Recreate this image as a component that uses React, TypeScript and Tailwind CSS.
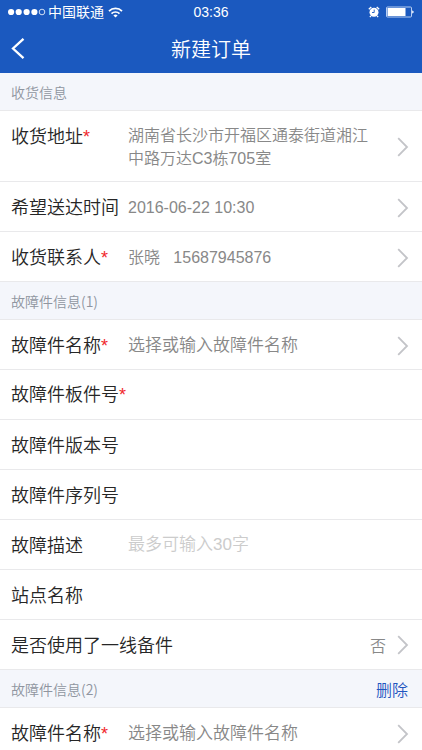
import { useState, type ReactNode } from "react";

const valueFont = "font-['Liberation_Sans','Noto_Sans_CJK_SC',sans-serif]";

function Chevron() {
  return (
    <svg className="h-5 w-3 shrink-0" viewBox="0 0 12 20" fill="none" aria-hidden="true">
      <path d="M1.2 1.2 10 10 1.2 18.8" stroke="#c3c4c8" strokeWidth="1.8" />
    </svg>
  );
}

function StatusBar() {
  return (
    <div className={`grid h-6 grid-cols-[1fr_auto_1fr] items-center px-2 text-sm leading-6 ${valueFont}`}>
      <div className="flex items-center">
        <svg className="h-2 w-10" viewBox="0 0 40 8" aria-hidden="true">
          <circle cx="3.1" cy="4" r="3.1" fill="#fff" />
          <circle cx="10.7" cy="4" r="3.1" fill="#fff" />
          <circle cx="18.6" cy="4" r="3.1" fill="#fff" />
          <circle cx="26.4" cy="4" r="3.1" fill="#fff" />
          <circle cx="34" cy="4" r="2.8" fill="none" stroke="#fff" strokeWidth="0.8" />
        </svg>
        <span>中国联通</span>
        <svg className="ml-1 h-[11px] w-[15px]" viewBox="0 0 15 11" fill="none" stroke="#fff" aria-hidden="true">
          <path d="M1 4.1a9.2 9.2 0 0 1 13 0" strokeWidth="1.8" />
          <path d="M3.5 6.7a5.6 5.6 0 0 1 8 0" strokeWidth="1.7" />
          <path d="M7.5 10.6 5.4 8.5a3 3 0 0 1 4.2 0Z" fill="#fff" stroke="none" />
        </svg>
      </div>
      <span>03:36</span>
      <div className="flex items-center justify-end gap-1.5">
        <svg className="h-3 w-3" viewBox="0 0 12 12" aria-hidden="true">
          <circle cx="6" cy="6.3" r="4.5" fill="#fff" />
          <path d="M.8 3.2 3.3.9M11.2 3.2 8.7.9M2.9 9.9l-1 1.3M9.1 9.9l1 1.3" stroke="#fff" strokeWidth="1.3" />
          <path d="M6.2 3.6v2.9H4" fill="none" stroke="#1b59bf" strokeWidth="0.9" />
        </svg>
        <svg className="h-3 w-7" viewBox="0 0 28 12" aria-hidden="true">
          <rect x="0.5" y="1" width="25" height="10" rx="1" fill="none" stroke="#c9dbf8" strokeWidth="0.9" />
          <rect x="1.5" y="2" width="18" height="8" fill="#fff" />
          <path d="M26.2 4.2 28 6l-1.8 1.8Z" fill="#fff" />
        </svg>
      </div>
    </div>
  );
}

function Section({ title, children }: { title: string; children?: ReactNode }) {
  return (
    <div className="flex h-[38px] items-center justify-between border-b border-[#e9e9eb] bg-[#f4f6fb] pr-[14px] pl-[11px]">
      <h2 className="text-sm leading-[18px] font-[350] text-[#8f959f]">{title}</h2>
      {children}
    </div>
  );
}

function Star() {
  return <span className={`text-[#f0282d] ${valueFont}`}>*</span>;
}

const rowBox = "flex w-full border-b border-[#e9e9eb] bg-white pr-[13px] pl-[11px] text-left";
const labelText = "shrink-0 text-lg leading-[23px] font-[350] whitespace-nowrap text-[#262626]";

type LinkRowProps = {
  label: string;
  required?: boolean;
  value: string;
  prompt?: boolean;
};

function LinkRow({ label, required, value, prompt }: LinkRowProps) {
  return (
    <button type="button" className={`${rowBox} min-h-[50px] items-center pt-[13px] pb-[11px]`}>
      <span className={`${labelText} w-[117px] self-start`}>
        {label}
        {required && <Star />}
      </span>
      <span
        className={`flex-1 pr-6 leading-[23px] font-[350] whitespace-pre-wrap text-[#888] ${valueFont} ${prompt ? "text-[17px]" : "text-base"}`}
      >
        {value}
      </span>
      <Chevron />
    </button>
  );
}

type InputRowProps = {
  id: string;
  label: string;
  required?: boolean;
  placeholder?: string;
};

function InputRow({ id, label, required, placeholder }: InputRowProps) {
  return (
    <div className={`${rowBox} h-[50px] items-center`}>
      <label htmlFor={id} className={`${labelText} w-[117px]`}>
        {label}
        {required && <Star />}
      </label>
      <input
        id={id}
        type="text"
        maxLength={30}
        placeholder={placeholder}
        className={`h-8 min-w-0 flex-1 bg-transparent text-[17px] font-[350] text-[#888] outline-none placeholder:text-[#ccc] ${valueFont}`}
      />
    </div>
  );
}

export default function App() {
  const [usedSpare, setUsedSpare] = useState(false);

  return (
    <div className="min-h-screen bg-white font-['Noto_Sans_CJK_SC',sans-serif]">
      <header className="bg-[#1b59bf] text-white">
        <StatusBar />
        <div className="grid h-[49px] grid-cols-[1fr_auto_1fr] items-center px-[11px]">
          <button type="button" aria-label="返回" className="w-fit">
            <svg className="h-[22px] w-[14px]" viewBox="0 0 14 22" fill="none" aria-hidden="true">
              <path d="M12.5 .8 2 10.5l10.5 9.7" stroke="#fff" strokeWidth="2.3" />
            </svg>
          </button>
          <h1 className="text-xl font-[350]">新建订单</h1>
        </div>
      </header>

      <main>
        <Section title="收货信息" />
        <LinkRow label="收货地址" required value="湖南省长沙市开福区通泰街道湘江中路万达C3栋705室" />
        <LinkRow label="希望送达时间" value="2016-06-22 10:30" />
        <LinkRow label="收货联系人" required value={"张晓   15687945876"} />

        <Section title="故障件信息(1)" />
        <LinkRow label="故障件名称" required value="选择或输入故障件名称" prompt />
        <InputRow id="board" label="故障件板件号" required />
        <InputRow id="version" label="故障件版本号" />
        <InputRow id="serial" label="故障件序列号" />
        <InputRow id="description" label="故障描述" placeholder="最多可输入30字" />
        <InputRow id="site" label="站点名称" />
        <button
          type="button"
          onClick={() => setUsedSpare(!usedSpare)}
          className={`${rowBox} h-[50px] items-center justify-between`}
        >
          <span className={labelText}>是否使用了一线备件</span>
          <span className="flex items-center gap-[11px] text-base font-[350] text-[#888]">
            {usedSpare ? "是" : "否"}
            <Chevron />
          </span>
        </button>

        <Section title="故障件信息(2)">
          <button type="button" className="text-base font-[350] text-[#1f55bf]">
            删除
          </button>
        </Section>
        <LinkRow label="故障件名称" required value="选择或输入故障件名称" prompt />
      </main>
    </div>
  );
}
